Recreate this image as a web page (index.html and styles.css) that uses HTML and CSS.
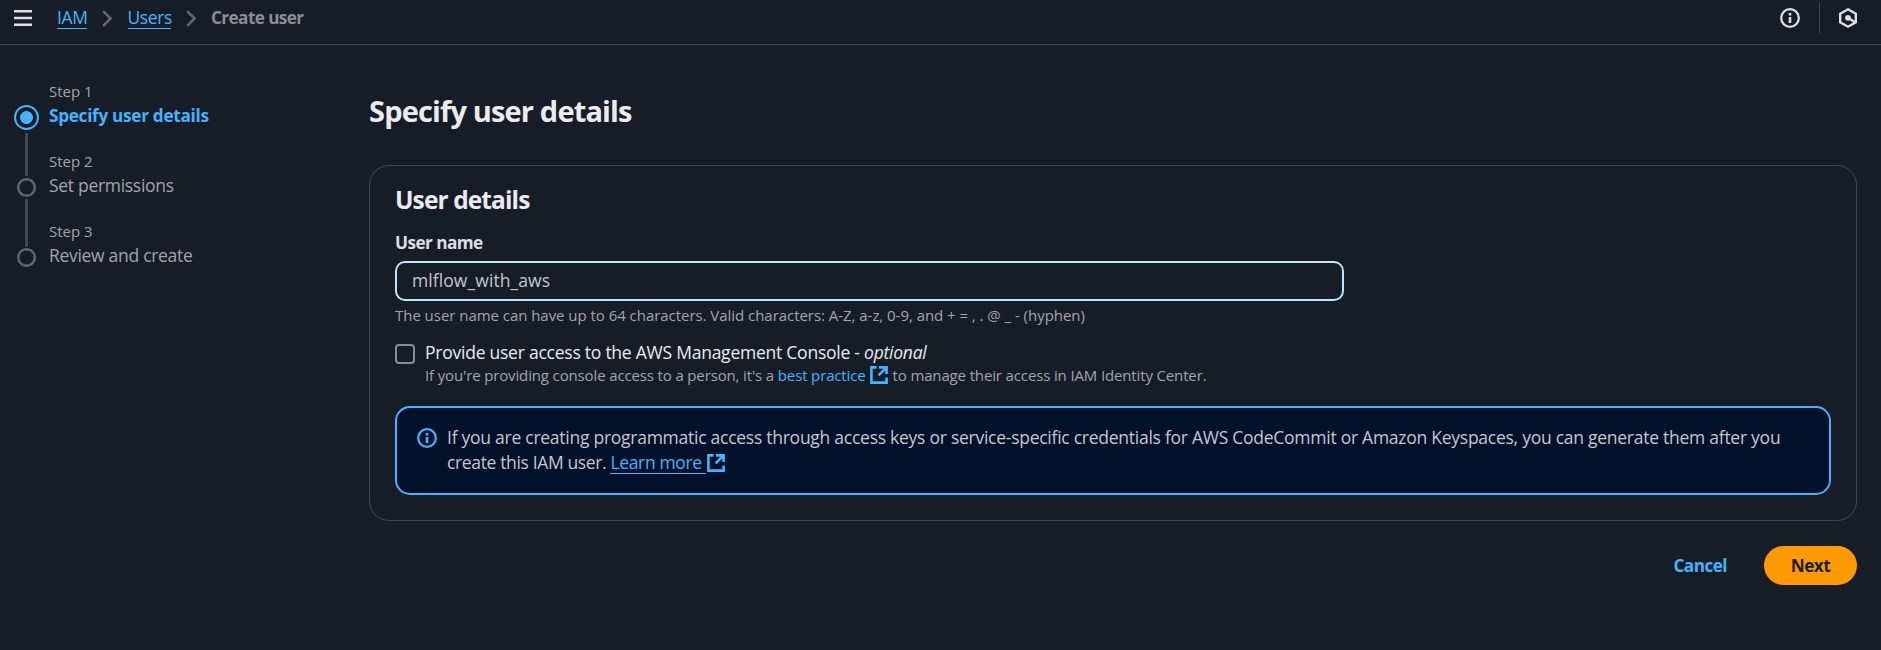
FILE: index.html
```html
<!DOCTYPE html>
<html lang="en">
<head>
<meta charset="utf-8">
<title>Create user | IAM</title>
<link rel="stylesheet" href="styles.css">
</head>
<body>
<svg class="defs" width="0" height="0">
  <symbol id="external" viewBox="0 0 18 18"><path d="M6.5 1.4H1.4v15.2h15.2V11.5M9 1.4h7.6V8M16 2 8.6 9.4" fill="none" stroke="currentColor" stroke-width="2.6"/></symbol>
  <symbol id="info" viewBox="0 0 20 20"><circle cx="10" cy="10" r="8.8" fill="none" stroke="currentColor" stroke-width="2.3"/><path d="M8.7 5h2.6v2.4H8.7zM8.7 9h2.6v6H8.7z" fill="currentColor"/></symbol>
  <symbol id="chevron" viewBox="0 0 11 17"><path d="M1.2 1.2 8.6 8.5 1.2 15.8" fill="none" stroke="currentColor" stroke-width="2.5"/></symbol>
</svg>
<header class="topbar">
  <svg class="menu" viewBox="0 0 18 16"><path d="M0 1.2h18M0 8h18M0 14.8h18" stroke="currentColor" stroke-width="2.4"/></svg>
  <nav class="crumbs">
    <a class="crumb iam">IAM</a>
    <svg class="chev"><use href="#chevron"/></svg>
    <a class="crumb users">Users</a>
    <svg class="chev"><use href="#chevron"/></svg>
    <span class="current">Create user</span>
  </nav>
  <div class="tools">
    <svg class="info"><use href="#info"/></svg>
    <span class="divider"></span>
    <svg class="hex" viewBox="0 0 18 20"><path d="M9 1.3 16.8 5.6v8.8L9 18.7 1.2 14.4V5.6z" fill="none" stroke="currentColor" stroke-width="2.4"/><circle cx="9" cy="9.8" r="2.9" fill="currentColor"/><path d="M9 9.8l7 4.4" stroke="currentColor" stroke-width="2.4"/></svg>
  </div>
</header>
<div class="layout">
  <ol class="steps">
    <li class="step active"><span class="rail"><i class="dot"></i><i class="line"></i></span><div><p class="num">Step 1</p><p class="name">Specify user details</p></div></li>
    <li class="step"><span class="rail"><i class="dot"></i><i class="line"></i></span><div><p class="num">Step 2</p><p class="name">Set permissions</p></div></li>
    <li class="step"><span class="rail"><i class="dot"></i></span><div><p class="num">Step 3</p><p class="name">Review and create</p></div></li>
  </ol>
  <main class="main">
    <h1>Specify user details</h1>
    <section class="card">
      <h2>User details</h2>
      <label class="label">User name</label>
      <div class="input">mlflow_with_aws</div>
      <p class="hint">The user name can have up to 64 characters. Valid characters: A-Z, a-z, 0-9, and + = , . @ _ - (hyphen)</p>
      <div class="check">
        <span class="box"></span>
        <div>
          <p class="check-label">Provide user access to the AWS Management Console - <em>optional</em></p>
          <p class="desc"><span>If you're providing console access to a person, it's a <a>best practice</a></span><svg class="ext small"><use href="#external"/></svg><span>to manage their access in IAM Identity Center.</span></p>
        </div>
      </div>
      <div class="alert">
        <svg class="alert-icon"><use href="#info"/></svg>
        <div class="alert-text">
          <p class="first">If you are creating programmatic access through access keys or service-specific credentials for AWS CodeCommit or Amazon Keyspaces, you can generate them after you</p>
          <p class="second">create this IAM user. <a class="learn">Learn more </a><svg class="ext learn-icon"><use href="#external"/></svg></p>
        </div>
      </div>
    </section>
    <div class="actions"><button class="cancel">Cancel</button><button class="next">Next</button></div>
  </main>
</div>
</body>
</html>
```
FILE: styles.css
```css
* { box-sizing: border-box; margin: 0; padding: 0; }
body { height: 650px; overflow: hidden; background: #161d26; color: #c6c6cd; font: 17.5px/25px "Open Sans", "Noto Sans", sans-serif; white-space: nowrap; }
svg { display: block; flex: none; overflow: visible; }
.defs { position: absolute; }
.topbar { height: 45px; border-bottom: 1px solid #424650; display: flex; align-items: center; padding: 0 24px 8px 14px; }
.menu { width: 18px; height: 16px; color: #dedee3; }
.crumbs { display: flex; align-items: center; margin-left: 25px; }
.crumb { color: #42b4ff; height: 21px; line-height: 18px; border-bottom: 1px solid #42b4ff; margin-top: 1px; letter-spacing: -.4px; }
.iam { width: 30px; }
.users { width: 43px; }
.chev { width: 11px; height: 17px; margin: 0 14.5px 0 15px; color: #656871; }
.current { font-weight: 700; font-size: 17.2px; letter-spacing: -.6px; color: #8c8c94; margin-top: -1px; }
.tools { margin-left: auto; display: flex; align-items: center; color: #dedee3; }
.info { width: 20px; height: 20px; }
.divider { width: 1px; height: 30px; background: #424650; margin: 0 19px; }
.hex { width: 18px; height: 20px; }
.layout { display: flex; }
.steps { width: 369px; flex: none; padding: 36px 0 0 14px; list-style: none; }
.step { display: flex; height: 70px; gap: 10px; }
.rail { width: 25px; padding-top: 27px; display: flex; flex-direction: column; align-items: center; gap: 2px; }
.dot { width: 19px; height: 19px; flex: none; border: 2.5px solid #656871; border-radius: 50%; box-shadow: inset 0 0 0 .5px #656871; }
.line { width: 3px; height: 48px; flex: none; background: #424650; }
.active .rail { padding-top: 24px; gap: 3px; }
.active .dot { width: 25px; height: 25px; border-color: #42b4ff; box-shadow: none; background: radial-gradient(circle, #42b4ff 6px, transparent 6.8px); }
.active .line { height: 43px; }
.num { font-size: 15px; line-height: 20px; color: #a4a4ad; }
.name { line-height: 25px; color: #a4a4ad; margin-top: 2px; letter-spacing: -.3px; }
.active .name { color: #42b4ff; font-weight: 700; font-size: 17.2px; letter-spacing: -.3px; }
.main { flex: 1; padding: 48px 24px 0 0; }
h1 { font-size: 29px; line-height: 36px; color: #ebebf0; letter-spacing: -.84px; }
.card { margin-top: 36px; height: 356px; border: 1px solid #424650; border-radius: 20px; padding: 19px 25px; }
h2 { font-size: 24.5px; line-height: 30px; color: #ebebf0; letter-spacing: -.9px; }
.label { display: block; margin-top: 15px; font-weight: 700; font-size: 17.2px; letter-spacing: -.55px; color: #dedee3; line-height: 25px; }
.input { margin-top: 6px; width: 949px; height: 40px; border: 2px solid #b8e7ff; border-radius: 10px; padding: 5px 15px; line-height: 25px; letter-spacing: .08px; }
.hint { font-size: 15px; line-height: 20px; margin-top: 4px; color: #a4a4ad; letter-spacing: -.04px; }
.check { display: flex; gap: 10px; margin-top: 15px; }
.box { width: 20px; height: 20px; border: 2px solid #8c8c94; border-radius: 4px; margin-top: 4px; }
.check-label { color: #ebebf0; line-height: 25px; letter-spacing: -.24px; }
.desc { display: flex; font-size: 15px; line-height: 20px; color: #a4a4ad; letter-spacing: -.14px; }
a { color: #42b4ff; }
.ext { width: 18px; height: 18px; color: #42b4ff; }
.small { margin: 1px 5px 0 4px; }
.alert { margin-top: 21px; height: 89px; border: 2px solid #42b4ff; border-radius: 15px; background: #001129; padding: 17px 20px; display: flex; gap: 10px; }
.alert-icon { width: 20px; height: 20px; margin-top: 3px; color: #42b4ff; }
.alert-text { letter-spacing: -.26px; }
.second { display: flex; white-space: pre; letter-spacing: -.36px; }
.learn { border-bottom: 1px solid #42b4ff; height: 24px; }
.learn-icon { margin: 4px 0 0 1px; }
.actions { display: flex; justify-content: flex-end; margin-top: 25px; gap: 37px; }
button { border: 0; background: none; font: inherit; font-weight: 700; font-size: 17.2px; letter-spacing: -.55px; height: 39px; padding-bottom: 1px; }
.cancel { color: #42b4ff; }
.next { width: 93px; border-radius: 20px; background: #ff9900; color: #161d26; }
```
